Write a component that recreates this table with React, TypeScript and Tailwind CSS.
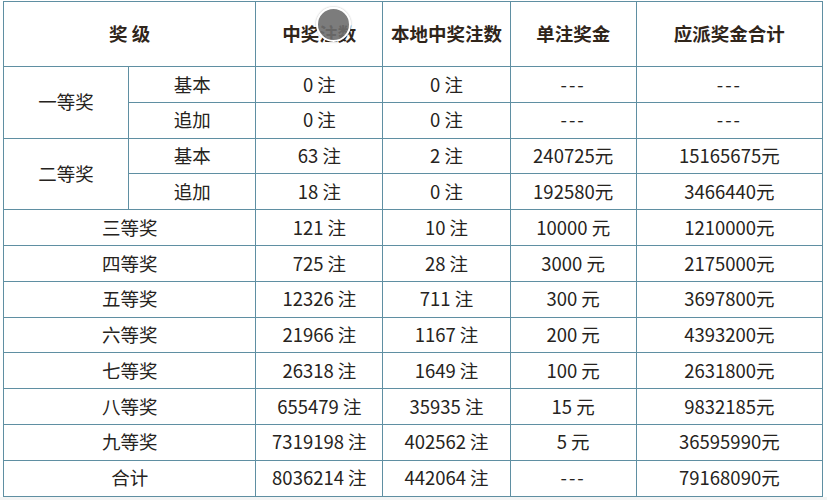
import React from 'react'

type Row = { label: string; sub?: string; span?: number; count: string; local: string; unit: string; total: string }

const ROWS: Row[] = [
  { label: '一等奖', sub: '基本', span: 2, count: '0 注', local: '0 注', unit: '---', total: '---' },
  { label: '', sub: '追加', count: '0 注', local: '0 注', unit: '---', total: '---' },
  { label: '二等奖', sub: '基本', span: 2, count: '63 注', local: '2 注', unit: '240725元', total: '15165675元' },
  { label: '', sub: '追加', count: '18 注', local: '0 注', unit: '192580元', total: '3466440元' },
  { label: '三等奖', count: '121 注', local: '10 注', unit: '10000 元', total: '1210000元' },
  { label: '四等奖', count: '725 注', local: '28 注', unit: '3000 元', total: '2175000元' },
  { label: '五等奖', count: '12326 注', local: '711 注', unit: '300 元', total: '3697800元' },
  { label: '六等奖', count: '21966 注', local: '1167 注', unit: '200 元', total: '4393200元' },
  { label: '七等奖', count: '26318 注', local: '1649 注', unit: '100 元', total: '2631800元' },
  { label: '八等奖', count: '655479 注', local: '35935 注', unit: '15 元', total: '9832185元' },
  { label: '九等奖', count: '7319198 注', local: '402562 注', unit: '5 元', total: '36595990元' },
  { label: '合计', count: '8036214 注', local: '442064 注', unit: '---', total: '79168090元' },
]

const cell = 'border border-[#5f8fa2] text-center align-middle p-0'

export default function App() {
  return (
    <div className="relative w-[827px] h-[500px] bg-[#f3f4f4] overflow-hidden" style={{ fontFamily: '"Noto Sans CJK SC", "Noto Sans", sans-serif' }}>
      <div className="bg-white w-[827px] h-[497px] pt-[1px] pl-[3px]">
        <table className="border-collapse table-fixed w-[820px] text-[18.5px] text-[#262320] bg-white">
          <colgroup>
            <col className="w-[125px]" />
            <col className="w-[127px]" />
            <col className="w-[127px]" />
            <col className="w-[127px]" />
            <col className="w-[126px]" />
            <col className="w-[186px]" />
          </colgroup>
          <thead>
            <tr className="h-[65px] font-bold text-[#30251a]">
              <th colSpan={2} className={cell}>奖 级</th>
              <th className={cell}>中奖注数</th>
              <th className={cell}>本地中奖注数</th>
              <th className={cell}>单注奖金</th>
              <th className={cell}>应派奖金合计</th>
            </tr>
          </thead>
          <tbody>
            {ROWS.map((r, i) => (
              <tr key={i} className="h-[35.8px]">
                {r.sub ? (
                  <>
                    {r.span && <td rowSpan={r.span} className={cell}>{r.label}</td>}
                    <td className={cell}>{r.sub}</td>
                  </>
                ) : (
                  <td colSpan={2} className={cell}>{r.label}</td>
                )}
                <td className={cell}>{r.count}</td>
                <td className={cell}>{r.local}</td>
                <td className={cell}>{r.unit === '---' ? <span className="tracking-[2px]">---</span> : r.unit}</td>
                <td className={cell}>{r.total === '---' ? <span className="tracking-[2px]">---</span> : r.total}</td>
              </tr>
            ))}
          </tbody>
        </table>
      </div>
      {/* touch indicator over the header */}
      <div className="absolute left-[316px] top-[7px] w-[35px] h-[35px] rounded-full bg-[#6e6e6e]/90 border-2 border-white shadow-[0_0_2px_rgba(0,0,0,0.3)]" />
    </div>
  )
}
